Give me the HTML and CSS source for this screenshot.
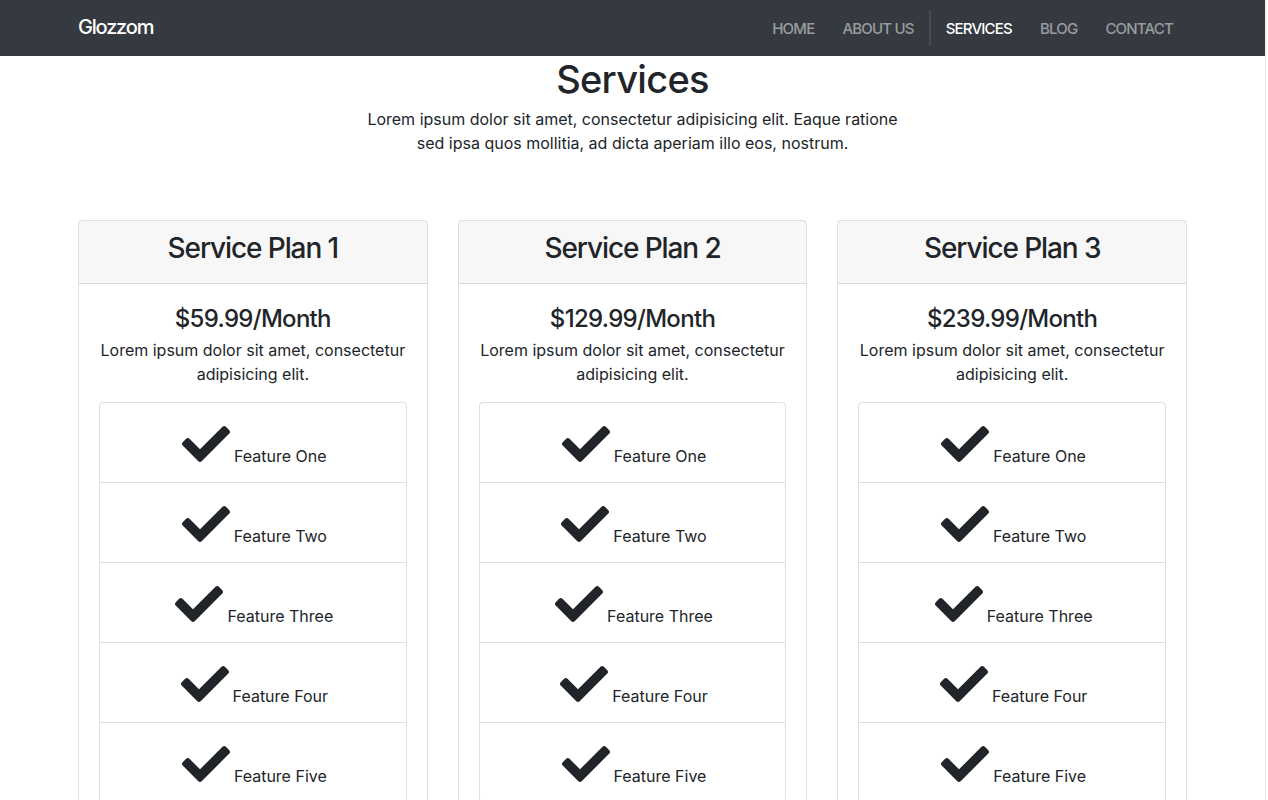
FILE: index.html
```html
<!DOCTYPE html>
<html lang="en">
<head>
<meta charset="utf-8">
<title>Glozzom - Services</title>
<link rel="stylesheet" href="styles.css">
</head>
<body>
<div class="page">
  <nav class="navbar">
    <div class="container nav-inner">
      <a class="brand" href="#">Glozzom</a>
      <ul class="nav-links">
        <li><a href="#">Home</a></li>
        <li><a href="#">About Us</a></li>
        <li class="divider"></li>
        <li><a class="active" href="#">Services</a></li>
        <li><a href="#">Blog</a></li>
        <li><a href="#">Contact</a></li>
      </ul>
    </div>
  </nav>

  <header class="container intro">
    <h1>Services</h1>
    <p>Lorem ipsum dolor sit amet, consectetur adipisicing elit. Eaque ratione sed ipsa quos mollitia, ad dicta aperiam illo eos, nostrum.</p>
  </header>

  <section class="container plans">
    <div class="card">
      <div class="card-header"><h3>Service Plan 1</h3></div>
      <div class="card-body">
        <h4>$59.99/Month</h4>
        <p>Lorem ipsum dolor sit amet, consectetur adipisicing elit.</p>
        <ul class="list">
          <li class="item"><svg class="check" viewBox="0 64 512 384"><path d="M173.898 439.404l-166.4-166.4c-9.997-9.997-9.997-26.206 0-36.204l36.203-36.204c9.997-9.998 26.207-9.998 36.204 0L192 312.69 432.095 72.596c9.997-9.997 26.207-9.997 36.204 0l36.203 36.204c9.997 9.997 9.997 26.206 0 36.204l-294.4 294.401c-9.998 9.997-26.207 9.997-36.204-.001z"/></svg><span>Feature One</span></li>
          <li class="item"><svg class="check" viewBox="0 64 512 384"><path d="M173.898 439.404l-166.4-166.4c-9.997-9.997-9.997-26.206 0-36.204l36.203-36.204c9.997-9.998 26.207-9.998 36.204 0L192 312.69 432.095 72.596c9.997-9.997 26.207-9.997 36.204 0l36.203 36.204c9.997 9.997 9.997 26.206 0 36.204l-294.4 294.401c-9.998 9.997-26.207 9.997-36.204-.001z"/></svg><span>Feature Two</span></li>
          <li class="item"><svg class="check" viewBox="0 64 512 384"><path d="M173.898 439.404l-166.4-166.4c-9.997-9.997-9.997-26.206 0-36.204l36.203-36.204c9.997-9.998 26.207-9.998 36.204 0L192 312.69 432.095 72.596c9.997-9.997 26.207-9.997 36.204 0l36.203 36.204c9.997 9.997 9.997 26.206 0 36.204l-294.4 294.401c-9.998 9.997-26.207 9.997-36.204-.001z"/></svg><span>Feature Three</span></li>
          <li class="item"><svg class="check" viewBox="0 64 512 384"><path d="M173.898 439.404l-166.4-166.4c-9.997-9.997-9.997-26.206 0-36.204l36.203-36.204c9.997-9.998 26.207-9.998 36.204 0L192 312.69 432.095 72.596c9.997-9.997 26.207-9.997 36.204 0l36.203 36.204c9.997 9.997 9.997 26.206 0 36.204l-294.4 294.401c-9.998 9.997-26.207 9.997-36.204-.001z"/></svg><span>Feature Four</span></li>
          <li class="item"><svg class="check" viewBox="0 64 512 384"><path d="M173.898 439.404l-166.4-166.4c-9.997-9.997-9.997-26.206 0-36.204l36.203-36.204c9.997-9.998 26.207-9.998 36.204 0L192 312.69 432.095 72.596c9.997-9.997 26.207-9.997 36.204 0l36.203 36.204c9.997 9.997 9.997 26.206 0 36.204l-294.4 294.401c-9.998 9.997-26.207 9.997-36.204-.001z"/></svg><span>Feature Five</span></li>
        </ul>
      </div>
    </div>

    <div class="card">
      <div class="card-header"><h3>Service Plan 2</h3></div>
      <div class="card-body">
        <h4>$129.99/Month</h4>
        <p>Lorem ipsum dolor sit amet, consectetur adipisicing elit.</p>
        <ul class="list">
          <li class="item"><svg class="check" viewBox="0 64 512 384"><path d="M173.898 439.404l-166.4-166.4c-9.997-9.997-9.997-26.206 0-36.204l36.203-36.204c9.997-9.998 26.207-9.998 36.204 0L192 312.69 432.095 72.596c9.997-9.997 26.207-9.997 36.204 0l36.203 36.204c9.997 9.997 9.997 26.206 0 36.204l-294.4 294.401c-9.998 9.997-26.207 9.997-36.204-.001z"/></svg><span>Feature One</span></li>
          <li class="item"><svg class="check" viewBox="0 64 512 384"><path d="M173.898 439.404l-166.4-166.4c-9.997-9.997-9.997-26.206 0-36.204l36.203-36.204c9.997-9.998 26.207-9.998 36.204 0L192 312.69 432.095 72.596c9.997-9.997 26.207-9.997 36.204 0l36.203 36.204c9.997 9.997 9.997 26.206 0 36.204l-294.4 294.401c-9.998 9.997-26.207 9.997-36.204-.001z"/></svg><span>Feature Two</span></li>
          <li class="item"><svg class="check" viewBox="0 64 512 384"><path d="M173.898 439.404l-166.4-166.4c-9.997-9.997-9.997-26.206 0-36.204l36.203-36.204c9.997-9.998 26.207-9.998 36.204 0L192 312.69 432.095 72.596c9.997-9.997 26.207-9.997 36.204 0l36.203 36.204c9.997 9.997 9.997 26.206 0 36.204l-294.4 294.401c-9.998 9.997-26.207 9.997-36.204-.001z"/></svg><span>Feature Three</span></li>
          <li class="item"><svg class="check" viewBox="0 64 512 384"><path d="M173.898 439.404l-166.4-166.4c-9.997-9.997-9.997-26.206 0-36.204l36.203-36.204c9.997-9.998 26.207-9.998 36.204 0L192 312.69 432.095 72.596c9.997-9.997 26.207-9.997 36.204 0l36.203 36.204c9.997 9.997 9.997 26.206 0 36.204l-294.4 294.401c-9.998 9.997-26.207 9.997-36.204-.001z"/></svg><span>Feature Four</span></li>
          <li class="item"><svg class="check" viewBox="0 64 512 384"><path d="M173.898 439.404l-166.4-166.4c-9.997-9.997-9.997-26.206 0-36.204l36.203-36.204c9.997-9.998 26.207-9.998 36.204 0L192 312.69 432.095 72.596c9.997-9.997 26.207-9.997 36.204 0l36.203 36.204c9.997 9.997 9.997 26.206 0 36.204l-294.4 294.401c-9.998 9.997-26.207 9.997-36.204-.001z"/></svg><span>Feature Five</span></li>
        </ul>
      </div>
    </div>

    <div class="card">
      <div class="card-header"><h3>Service Plan 3</h3></div>
      <div class="card-body">
        <h4>$239.99/Month</h4>
        <p>Lorem ipsum dolor sit amet, consectetur adipisicing elit.</p>
        <ul class="list">
          <li class="item"><svg class="check" viewBox="0 64 512 384"><path d="M173.898 439.404l-166.4-166.4c-9.997-9.997-9.997-26.206 0-36.204l36.203-36.204c9.997-9.998 26.207-9.998 36.204 0L192 312.69 432.095 72.596c9.997-9.997 26.207-9.997 36.204 0l36.203 36.204c9.997 9.997 9.997 26.206 0 36.204l-294.4 294.401c-9.998 9.997-26.207 9.997-36.204-.001z"/></svg><span>Feature One</span></li>
          <li class="item"><svg class="check" viewBox="0 64 512 384"><path d="M173.898 439.404l-166.4-166.4c-9.997-9.997-9.997-26.206 0-36.204l36.203-36.204c9.997-9.998 26.207-9.998 36.204 0L192 312.69 432.095 72.596c9.997-9.997 26.207-9.997 36.204 0l36.203 36.204c9.997 9.997 9.997 26.206 0 36.204l-294.4 294.401c-9.998 9.997-26.207 9.997-36.204-.001z"/></svg><span>Feature Two</span></li>
          <li class="item"><svg class="check" viewBox="0 64 512 384"><path d="M173.898 439.404l-166.4-166.4c-9.997-9.997-9.997-26.206 0-36.204l36.203-36.204c9.997-9.998 26.207-9.998 36.204 0L192 312.69 432.095 72.596c9.997-9.997 26.207-9.997 36.204 0l36.203 36.204c9.997 9.997 9.997 26.206 0 36.204l-294.4 294.401c-9.998 9.997-26.207 9.997-36.204-.001z"/></svg><span>Feature Three</span></li>
          <li class="item"><svg class="check" viewBox="0 64 512 384"><path d="M173.898 439.404l-166.4-166.4c-9.997-9.997-9.997-26.206 0-36.204l36.203-36.204c9.997-9.998 26.207-9.998 36.204 0L192 312.69 432.095 72.596c9.997-9.997 26.207-9.997 36.204 0l36.203 36.204c9.997 9.997 9.997 26.206 0 36.204l-294.4 294.401c-9.998 9.997-26.207 9.997-36.204-.001z"/></svg><span>Feature Four</span></li>
          <li class="item"><svg class="check" viewBox="0 64 512 384"><path d="M173.898 439.404l-166.4-166.4c-9.997-9.997-9.997-26.206 0-36.204l36.203-36.204c9.997-9.998 26.207-9.998 36.204 0L192 312.69 432.095 72.596c9.997-9.997 26.207-9.997 36.204 0l36.203 36.204c9.997 9.997 9.997 26.206 0 36.204l-294.4 294.401c-9.998 9.997-26.207 9.997-36.204-.001z"/></svg><span>Feature Five</span></li>
        </ul>
      </div>
    </div>
  </section>
</div>
</body>
</html>
```
FILE: styles.css
```css
html {
  overflow: hidden;
}

body {
  margin: 0;
  font-family: Inter, "Noto Sans", sans-serif;
  font-size: 16px;
  line-height: 24px;
  color: #212529;
  background: #fff;
}

.page {
  width: 1265px;
  box-shadow: 1px 0 0 #e8e8e8;
}

.container {
  width: 1109px;
  margin: 0 auto;
}

/* Navbar */
.navbar {
  background: #343a40;
  height: 56px;
}

.nav-inner {
  height: 56px;
  display: flex;
  align-items: center;
  justify-content: space-between;
}

.brand {
  color: #fff;
  text-decoration: none;
  font-size: 20px;
  font-weight: 500;
  letter-spacing: -1.2px;
  line-height: 30px;
  margin-top: -2px;
}

.nav-links {
  list-style: none;
  margin: 0;
  padding: 0;
  display: flex;
  align-items: center;
  height: 56px;
}

.nav-links a {
  display: block;
  padding: 2px 14px 0;
  color: rgba(255, 255, 255, 0.5);
  text-decoration: none;
  text-transform: uppercase;
  font-size: 15px;
  font-weight: 500;
  letter-spacing: -0.8px;
  line-height: 24px;
}

.nav-links a.active {
  color: #fff;
}

.divider {
  width: 2px;
  height: 36px;
  margin: 0 1px;
  background: #474c51;
}

/* Intro */
.intro {
  text-align: center;
}

.intro h1 {
  margin: 0 0 5px;
  font-size: 38px;
  line-height: 46px;
  font-weight: 500;
  letter-spacing: -0.7px;
}

.intro p {
  width: 540px;
  margin: 0 auto;
}

/* Plans */
.plans {
  margin-top: 65px;
  display: grid;
  grid-template-columns: repeat(3, 1fr);
  column-gap: 30px;
  align-items: start;
}

.card {
  border: 1px solid rgba(0, 0, 0, 0.125);
  border-radius: 4px;
  text-align: center;
}

.card-header {
  background: rgba(0, 0, 0, 0.03);
  border-bottom: 1px solid rgba(0, 0, 0, 0.125);
  padding: 10px 20px 18px;
}

.card-header h3 {
  margin: 0;
  font-size: 28px;
  line-height: 34px;
  font-weight: 500;
  letter-spacing: -1.1px;
}

.card-body {
  padding: 20px 20px 20px;
}

.card-body h4 {
  margin: 0 0 5px;
  font-size: 24px;
  line-height: 29px;
  font-weight: 500;
  letter-spacing: -0.7px;
}

.card-body p {
  margin: 0 0 16px;
}

.list {
  list-style: none;
  margin: 0;
  padding: 0;
  border: 1px solid rgba(0, 0, 0, 0.125);
  border-radius: 4px;
}

.item {
  box-sizing: border-box;
  height: 80px;
  padding: 23px 20px 0 23px;
  display: flex;
  justify-content: center;
  align-items: baseline;
  gap: 4px;
  border-top: 1px solid rgba(0, 0, 0, 0.125);
}

.item:first-child {
  border-top: 0;
  height: 79px;
}

.check {
  width: 48px;
  height: 36px;
  fill: #212529;
  flex: none;
}
```
